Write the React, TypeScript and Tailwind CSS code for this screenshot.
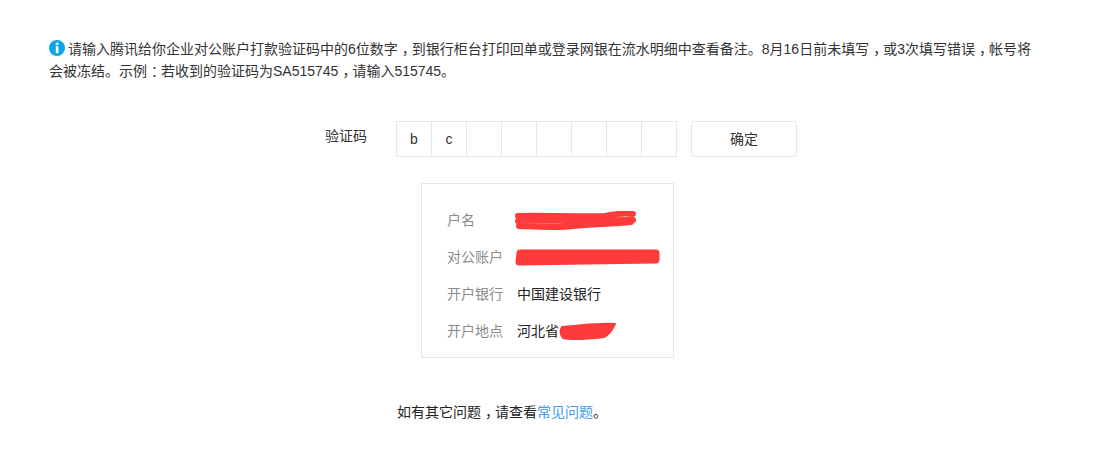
import React from 'react';

const font = { fontFamily: '"Liberation Sans", "Noto Sans CJK SC", sans-serif' };

const cells = ['b', 'c', '', '', '', '', '', ''];

// fullwidth punctuation sits in the middle of its cell in the original font
const P = ({ c }: { c: string }) => (
  <span className="inline-block pl-[4px] pr-[3px] [font-feature-settings:'halt']">{c}</span>
);

// red scribbles covering the private values
const NameScribble = () => (
  <svg width="126" height="20" viewBox="0 0 126 20" className="block -ml-[4px]">
    <path d="M5 5 C30 4 60 6 92 5 C102 3 112 2 120 3 M5 10 L120 9 M6 15 C30 16 45 17 60 15 C80 13 100 13 118 11" fill="none" stroke="#fe3b3b" strokeWidth="6" strokeLinecap="round" />
  </svg>
);

const AccountScribble = () => (
  <svg width="148" height="18" viewBox="0 0 148 18" className="block -ml-[4px]">
    <path d="M7 4 L143 4 L143 11 L6 13 Z" fill="#fe3b3b" stroke="#fe3b3b" strokeWidth="7" strokeLinejoin="round" />
  </svg>
);

const PlaceScribble = () => (
  <svg width="60" height="20" viewBox="0 0 60 20" className="block -ml-[2px]">
    <path d="M5 5 C20 4 40 1 58 2 C55 8 52 13 47 15 C30 17 15 18 6 16 C3 12 3 8 5 5 Z" fill="#fe3b3b" stroke="#fe3b3b" strokeWidth="2" strokeLinejoin="round" />
  </svg>
);

const rows: { label: string; value: React.ReactNode }[] = [
  { label: '户名', value: <NameScribble /> },
  { label: '对公账户', value: <AccountScribble /> },
  { label: '开户银行', value: '中国建设银行' },
  {
    label: '开户地点',
    value: (
      <span className="flex items-center">
        河北省
        <PlaceScribble />
      </span>
    ),
  },
];

export default function App() {
  return (
    <div className="w-[1098px] h-[473px] bg-white text-[14px] text-[#333] overflow-hidden" style={font}>
      <div className="pt-[38px] pl-[49px] leading-[22px]">
        <svg width="16" height="16" viewBox="0 0 16 16" className="inline-block align-[-2px] mr-[3px]">
          <circle cx="8" cy="8" r="8" fill="#0ea5e9" />
          <rect x="6.8" y="2.6" width="2.6" height="2.4" fill="#fff" />
          <rect x="6.8" y="6.2" width="2.6" height="7" fill="#fff" />
        </svg>
        请输入腾讯给你企业对公账户打款验证码中的6位数字<P c="，" />到银行柜台打印回单或登录网银在流水明细中查看备注。8月16日前未填写<P c="，" />或3次填写错误<P c="，" />帐号将
        <br />
        会被冻结。示例<P c="：" />若收到的验证码为SA515745<P c="，" />请输入515745。
      </div>

      <div className="flex items-start mt-[39px] pl-[325px]">
        <span className="w-[71px] leading-[30px]">验证码</span>
        <div className="flex h-[36px] border border-[#e6e7e9]">
          {cells.map((c, i) => (
            <div key={i} className={`flex items-center justify-center ${i < 7 ? 'w-[35px] border-r border-[#e6e7e9]' : 'w-[34px]'}`}>
              {c}
            </div>
          ))}
        </div>
        <button className="ml-[14px] w-[106px] h-[36px] border border-[#e6e7e9] rounded-[3px] bg-white text-[#333]">确定</button>
      </div>

      <div className="ml-[421px] mt-[26px] w-[253px] h-[175px] border border-[#e6e7e9] pt-[18px] pl-[25px]">
        {rows.map((r) => (
          <div key={r.label} className="flex items-center h-[37px]">
            <span className="w-[70px] text-[#8c8c8c]">{r.label}</span>
            <span className="text-[#222]">{r.value}</span>
          </div>
        ))}
      </div>

      <p className="mt-[44px] pl-[397px] text-[#222]">
        如有其它问题<P c="，" />请查看<a className="text-[#3f9cf0]">常见问题</a>。
      </p>
    </div>
  );
}
